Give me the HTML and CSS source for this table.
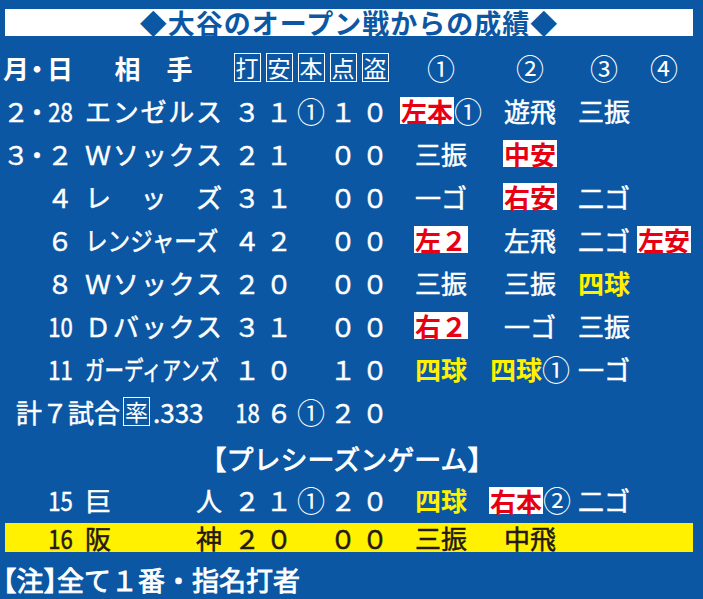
FILE: index.html
```html
<!DOCTYPE html>
<html lang="ja">
<head>
<meta charset="utf-8">
<title>大谷のオープン戦からの成績</title>
<link rel="stylesheet" href="styles.css">
</head>
<body>
<div class="board">
  <div class="title">◆大谷のオープン戦からの成績◆</div>

  <div class="row head">
    <div class="date"><span class="m">月</span><span class="dot">・</span><span class="d">日</span></div>
    <div class="team ctr">相　手</div>
    <div class="st"><span class="box">打</span></div>
    <div class="st"><span class="box">安</span></div>
    <div class="st"><span class="box">本</span></div>
    <div class="st"><span class="box">点</span></div>
    <div class="st"><span class="box">盗</span></div>
    <div class="res c">①</div>
    <div class="res c">②</div>
    <div class="res c">③</div>
    <div class="res c">④</div>
  </div>

  <div class="row">
    <div class="date"><span class="m">２</span><span class="dot">・</span><span class="d"><span class="n">28</span></span></div>
    <div class="team">エンゼルス</div>
    <div class="st">３</div><div class="st">１</div><div class="st c">①</div><div class="st">１</div><div class="st">０</div>
    <div class="res"><span class="hl">左本</span><span class="c">①</span></div>
    <div class="res">遊飛</div>
    <div class="res">三振</div>
    <div class="res"></div>
  </div>

  <div class="row">
    <div class="date"><span class="m">３</span><span class="dot">・</span><span class="d">２</span></div>
    <div class="team">Ｗソックス</div>
    <div class="st">２</div><div class="st">１</div><div class="st"></div><div class="st">０</div><div class="st">０</div>
    <div class="res">三振</div>
    <div class="res"><span class="hl">中安</span></div>
    <div class="res"></div>
    <div class="res"></div>
  </div>

  <div class="row">
    <div class="date"><span class="m"></span><span class="dot"></span><span class="d">４</span></div>
    <div class="team">レッズ</div>
    <div class="st">３</div><div class="st">１</div><div class="st"></div><div class="st">０</div><div class="st">０</div>
    <div class="res">一ゴ</div>
    <div class="res"><span class="hl">右安</span></div>
    <div class="res">二ゴ</div>
    <div class="res"></div>
  </div>

  <div class="row">
    <div class="date"><span class="m"></span><span class="dot"></span><span class="d">６</span></div>
    <div class="team"><span class="cond6">レンジャーズ</span></div>
    <div class="st">４</div><div class="st">２</div><div class="st"></div><div class="st">０</div><div class="st">０</div>
    <div class="res"><span class="hl">左２</span></div>
    <div class="res">左飛</div>
    <div class="res">二ゴ</div>
    <div class="res"><span class="hl">左安</span></div>
  </div>

  <div class="row">
    <div class="date"><span class="m"></span><span class="dot"></span><span class="d">８</span></div>
    <div class="team">Ｗソックス</div>
    <div class="st">２</div><div class="st">０</div><div class="st"></div><div class="st">０</div><div class="st">０</div>
    <div class="res">三振</div>
    <div class="res">三振</div>
    <div class="res"><span class="y">四球</span></div>
    <div class="res"></div>
  </div>

  <div class="row">
    <div class="date"><span class="m"></span><span class="dot"></span><span class="d"><span class="n">10</span></span></div>
    <div class="team">Ｄバックス</div>
    <div class="st">３</div><div class="st">１</div><div class="st"></div><div class="st">０</div><div class="st">０</div>
    <div class="res"><span class="hl">右２</span></div>
    <div class="res">一ゴ</div>
    <div class="res">三振</div>
    <div class="res"></div>
  </div>

  <div class="row">
    <div class="date"><span class="m"></span><span class="dot"></span><span class="d"><span class="n">11</span></span></div>
    <div class="team"><span class="cond7">ガーディアンズ</span></div>
    <div class="st">１</div><div class="st">０</div><div class="st"></div><div class="st">１</div><div class="st">０</div>
    <div class="res"><span class="y">四球</span></div>
    <div class="res"><span class="y">四球</span><span class="c">①</span></div>
    <div class="res">一ゴ</div>
    <div class="res"></div>
  </div>

  <div class="row total">
    <div class="sum">計７試合<span class="box">率</span><span class="avg">.333</span></div>
    <div class="st"><span class="n">18</span></div><div class="st">６</div><div class="st c">①</div><div class="st">２</div><div class="st">０</div>
    <div class="res"></div>
    <div class="res"></div>
    <div class="res"></div>
    <div class="res"></div>
  </div>

  <div class="pre">【プレシーズンゲーム】</div>

  <div class="row r15">
    <div class="date"><span class="m"></span><span class="dot"></span><span class="d"><span class="n">15</span></span></div>
    <div class="team">巨人</div>
    <div class="st">２</div><div class="st">１</div><div class="st c">①</div><div class="st">２</div><div class="st">０</div>
    <div class="res"><span class="y">四球</span></div>
    <div class="res"><span class="hl">右本</span><span class="c">②</span></div>
    <div class="res">二ゴ</div>
    <div class="res"></div>
  </div>

  <div class="row band">
    <div class="date"><span class="m"></span><span class="dot"></span><span class="d"><span class="n">16</span></span></div>
    <div class="team">阪神</div>
    <div class="st">２</div><div class="st">０</div><div class="st"></div><div class="st">０</div><div class="st">０</div>
    <div class="res">三振</div>
    <div class="res">中飛</div>
    <div class="res"></div>
    <div class="res"></div>
  </div>

  <div class="note"><span class="br">【</span>注<span class="br">】</span>全て１番・指名打者</div>
</div>
</body>
</html>
```

FILE: styles.css
```css
html, body {
  margin: 0;
  padding: 0;
}
body {
  width: 703px;
  height: 599px;
  overflow: hidden;
  background: #0b57a4;
  color: #fff;
  font-family: "Noto Sans CJK JP", "Noto Sans", sans-serif;
}
.board {
  padding-top: 9px;
}
.title {
  margin: 0 10px 0 5px;
  height: 27px;
  background: #fff;
  color: #0b57a4;
  font-size: 27px;
  line-height: 27px;
  font-weight: 700;
  text-align: center;
  letter-spacing: 1px;
  white-space: nowrap;
}
.row {
  margin: 0 10px 0 5px;
  height: 43px;
  display: grid;
  grid-template-columns: 80px 146px repeat(5, 32px) 100px 78px 70px 50px;
  align-items: center;
  font-size: 26px;
  line-height: 1;
  font-weight: 400;
  -webkit-text-stroke: 0.5px currentColor;
  white-space: nowrap;
}
.head {
  margin-top: 10px;
  font-weight: 700;
  -webkit-text-stroke: 0;
}
.date {
  display: flex;
  align-items: center;
}
.m {
  width: 22px;
  display: flex;
  justify-content: center;
}
.dot {
  width: 20px;
  display: flex;
  justify-content: center;
  font-feature-settings: "halt";
}
.d {
  width: 26px;
  display: flex;
  justify-content: center;
}
.n {
  display: inline-block;
  transform: scaleX(0.85);
}
.team {
  padding-right: 9px;
  text-align: justify;
  text-align-last: justify;
}
.team.ctr {
  text-align: center;
  text-align-last: center;
}
.cond6 {
  display: inline-block;
  transform: scaleX(0.87);
  transform-origin: left center;
}
.cond7 {
  display: inline-block;
  transform: scaleX(0.75);
  transform-origin: left center;
}
.st, .res {
  display: flex;
  justify-content: center;
  align-items: center;
}
.box {
  display: inline-flex;
  width: 25px;
  height: 27px;
  border: 1px solid #fff;
  align-items: center;
  justify-content: center;
  font-size: 23px;
  font-weight: 400;
  -webkit-text-stroke: 0;
}
.c {
  font-size: 28px;
  font-weight: 400;
  -webkit-text-stroke: 0;
}
.hl {
  display: inline-block;
  background: #fff;
  color: #e60012;
  font-weight: 700;
  -webkit-text-stroke: 0;
  height: 27px;
  line-height: 27px;
  padding: 0 1px;
}
.y {
  color: #fff100;
  font-weight: 700;
  -webkit-text-stroke: 0;
}
.sum {
  grid-column: 1 / 3;
  padding-left: 11px;
  display: flex;
  align-items: center;
}
.sum .box {
  margin-left: 3px;
}
.avg {
  margin-left: 3px;
}
.pre {
  margin: 4px 14px 0 5px;
  height: 42px;
  display: flex;
  align-items: center;
  justify-content: center;
  font-size: 27px;
  font-weight: 400;
  -webkit-text-stroke: 0.8px currentColor;
  line-height: 1;
}
.r15 {
  height: 42px;
}
.band {
  margin-top: 2px;
  height: 29px;
  background: #fff100;
  color: #231815;
}
.note {
  margin-top: 7px;
  height: 40px;
  display: flex;
  align-items: center;
  padding-left: 3px;
  font-size: 27px;
  line-height: 1;
  font-weight: 400;
  -webkit-text-stroke: 0.8px currentColor;
  white-space: nowrap;
}
.br {
  font-feature-settings: "halt";
}
```
